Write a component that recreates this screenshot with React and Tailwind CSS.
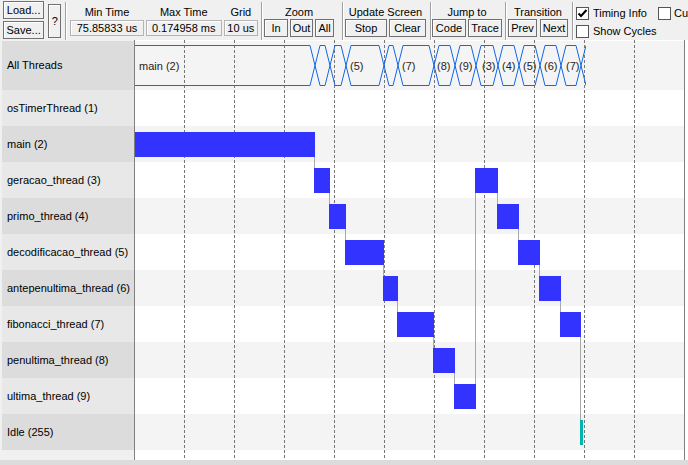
import React from 'react';

const threads = [
  'osTimerThread (1)',
  'main (2)',
  'geracao_thread (3)',
  'primo_thread (4)',
  'decodificacao_thread (5)',
  'antepenultima_thread (6)',
  'fibonacci_thread (7)',
  'penultima_thread (8)',
  'ultima_thread (9)',
  'Idle (255)',
];

// [row, start, end, label x in the "All Threads" strip]
const seq = [
  [1, 135, 315, 139],
  [2, 315, 330, null],
  [3, 330, 346, null],
  [4, 346, 384, 350],
  [5, 384, 398, null],
  [6, 398, 434, 402],
  [7, 434, 455, 437],
  [8, 455, 476, 459],
  [2, 476, 498, 482],
  [3, 498, 519, 502],
  [4, 519, 540, 523],
  [5, 540, 561, 544],
  [6, 561, 581, 566],
  [9, 581, 583, null],
];

const rowTop = (r) => 90 + r * 36;
const TOP = 45.5;
const BOT = 85.5;
const grid = [184, 234, 284, 334, 384, 434, 484, 534, 584, 634];

const Btn = ({ children, className }) => (
  <div
    className={`flex items-center justify-center border border-[#707070] bg-[#f0f0f0] shadow-[inset_1px_1px_0_#ffffff] text-[11px] leading-none text-black ${className}`}
  >
    {children}
  </div>
);

const Sep = ({ className }) => (
  <div className={`w-[2px] h-[38px] mt-[2px] border-l border-[#a0a0a0] bg-white ${className}`} />
);

const ValueBox = ({ label, value, className }) => (
  <div className={`flex flex-col ${className}`}>
    <div className="h-[16px] leading-[16px] text-center text-[11px] whitespace-nowrap">{label}</div>
    <div className="h-[16px] border border-[#b4b4b4] shadow-[inset_1px_1px_0_#ffffff] flex items-center justify-center text-[11px] leading-none whitespace-nowrap">
      {value}
    </div>
  </div>
);

const Group = ({ label, children, className }) => (
  <div className={`flex flex-col ${className}`}>
    <div className="h-[15px] leading-[16px] text-center text-[11px] whitespace-nowrap">{label}</div>
    <div className="flex">{children}</div>
  </div>
);

const Check = ({ checked }) => (
  <div className="w-[13px] h-[13px] border border-[#555] bg-white flex items-center justify-center">
    {checked && (
      <svg width="11" height="11" viewBox="0 0 11 11">
        <path d="M1.5 5.5 L4 8 L9.5 2" fill="none" stroke="#000" strokeWidth="2" />
      </svg>
    )}
  </div>
);

const Toolbar = () => (
  <div className="h-[40px] flex items-start bg-[#f0f0f0] pl-[3px] text-black">
    <div className="flex flex-col w-[42px]">
      <Btn className="mt-[1px] h-[18px]">Load...</Btn>
      <Btn className="mt-[2px] h-[18px]">Save...</Btn>
    </div>
    <Btn className="ml-[4px] mt-[4px] w-[13px] h-[34px]">?</Btn>
    <Sep className="ml-[4px]" />
    <ValueBox label="Min Time" value="75.85833 us" className="ml-[3px] w-[75px] pt-[4px]" />
    <ValueBox label="Max Time" value="0.174958 ms" className="ml-[2px] w-[77px] pt-[4px]" />
    <ValueBox label="Grid" value="10 us" className="ml-[2px] w-[35px] pt-[4px]" />
    <Sep className="ml-[3px]" />
    <Group label="Zoom" className="ml-[1px] pt-[4px]">
      <Btn className="w-[24px] h-[18px]">In</Btn>
      <Btn className="ml-[2px] w-[23px] h-[18px]">Out</Btn>
      <Btn className="ml-[2px] w-[19px] h-[18px]">All</Btn>
    </Group>
    <Sep className="ml-[8px]" />
    <Group label="Update Screen" className="ml-[1px] pt-[4px]">
      <Btn className="w-[42px] h-[18px]">Stop</Btn>
      <Btn className="ml-[2px] w-[37px] h-[18px]">Clear</Btn>
    </Group>
    <Sep className="ml-[4px]" />
    <Group label="Jump to" className="pt-[4px]">
      <Btn className="w-[34px] h-[18px]">Code</Btn>
      <Btn className="ml-[2px] w-[34px] h-[18px]">Trace</Btn>
    </Group>
    <Sep className="ml-[3px]" />
    <Group label="Transition" className="ml-[1px] pt-[4px]">
      <Btn className="w-[29px] h-[18px]">Prev</Btn>
      <Btn className="ml-[3px] w-[28px] h-[18px]">Next</Btn>
    </Group>
    <Sep className="ml-[4px]" />
    <div className="ml-[2px] pt-[7px] flex flex-col gap-[5px] text-[11px] leading-none">
      <div className="flex items-center h-[13px] whitespace-nowrap">
        <Check checked />
        <span className="ml-[4px] w-[65px]">Timing Info</span>
        <Check />
        <span className="ml-[3px]">Cu</span>
      </div>
      <div className="flex items-center h-[13px] whitespace-nowrap">
        <Check />
        <span className="ml-[4px]">Show Cycles</span>
      </div>
    </div>
  </div>
);

const Chart = () => {
  const conns = [];
  for (let i = 1; i < seq.length; i++) {
    const [r0] = seq[i - 1];
    const [r1, s] = seq[i];
    const x = s - 0.5;
    const y1 = r1 > r0 ? rowTop(r0) + 31 : rowTop(r0) + 6;
    const y2 = r1 > r0 ? rowTop(r1) + 6 : rowTop(r1) + 31;
    conns.push(<line key={i} x1={x} x2={x} y1={y1} y2={y2} stroke="#a8a8a8" strokeWidth="1" />);
  }

  const T = seq.slice(1).map((s) => s[1]);
  const wave = [];
  wave.push(<line key="t0" x1={135} x2={T[0] - 5} y1={TOP} y2={TOP} />);
  wave.push(<line key="b0" x1={135} x2={T[0] - 5} y1={BOT} y2={BOT} />);
  T.forEach((t, i) => {
    wave.push(<line key={`xa${i}`} x1={t - 5} y1={TOP} x2={t + 5} y2={BOT} />);
    wave.push(<line key={`xb${i}`} x1={t - 5} y1={BOT} x2={t + 5} y2={TOP} />);
    if (i < T.length - 1 && T[i + 1] - 5 > t + 5) {
      wave.push(<line key={`t${i + 1}`} x1={t + 5} x2={T[i + 1] - 5} y1={TOP} y2={TOP} />);
      wave.push(<line key={`b${i + 1}`} x1={t + 5} x2={T[i + 1] - 5} y1={BOT} y2={BOT} />);
    }
  });

  return (
    <svg className="absolute left-0 top-0" width="549" height="420" viewBox="0 0 549 420">
      <defs>
        <clipPath id="waveclip">
          <rect x="135" y="40" width="451" height="60" />
        </clipPath>
      </defs>
      <g transform="translate(-135 -40)">
        {grid.map((x) => (
          <line key={x} x1={x + 0.5} x2={x + 0.5} y1={40} y2={459} stroke="#777" strokeDasharray="3 2" />
        ))}
        <g clipPath="url(#waveclip)" stroke="#1068ec" strokeWidth="1" fill="none">
          {wave}
        </g>
        {seq.map(([r, , , lx], i) =>
          lx == null ? null : (
            <text
              key={i}
              x={lx}
              y={70}
              fontSize="11"
              fill="#2a2218"
              fontFamily="'Liberation Sans', Arial, sans-serif"
            >
              {i === 0 ? 'main (2)' : `(${r + 1})`}
            </text>
          )
        )}
        <g shapeRendering="crispEdges">{conns}</g>
        <g shapeRendering="crispEdges">
          {seq.map(([r, s, e], i) => {
            const x = i === 0 ? s : s - 1;
            return (
              <rect
                key={i}
                x={x}
                y={rowTop(r) + 6}
                width={e - x}
                height={25}
                fill={r === 9 ? '#00b4b0' : '#3333ff'}
              />
            );
          })}
        </g>
      </g>
    </svg>
  );
};

const App = () => (
  <div className="w-[688px] h-[465px] overflow-hidden bg-white flex flex-col font-['Liberation_Sans',Arial,sans-serif] text-black">
    <Toolbar />
    <div className="flex h-[420px]">
      <div className="w-[135px] border-r border-[#808080] bg-[#f0f0f0] pt-[1px] pl-[2px] flex flex-col">
        <div className="h-[49px] bg-[#dcdcdc] flex items-center pl-[5px] text-[11px]">All Threads</div>
        {threads.map((t, i) => (
          <div
            key={t}
            className={`h-[36px] flex items-center pl-[5px] text-[11px] whitespace-nowrap ${i % 2 ? 'bg-[#dcdcdc]' : 'bg-[#e8e8e8]'}`}
          >
            {t}
          </div>
        ))}
      </div>
      <div className="relative w-[550px] border-r border-[#808080] flex flex-col">
        <div className="h-[1px] bg-white" />
        <div className="h-[49px] bg-[#f4f4f4]" />
        {threads.map((t, i) => (
          <div key={t} className={`h-[36px] ${i % 2 ? 'bg-[#f4f4f4]' : 'bg-white'}`} />
        ))}
        <div className="flex-1 bg-white" />
        <Chart />
      </div>
      <div className="flex-1 bg-white" />
    </div>
    <div className="h-[5px] bg-[#dcdcdc]" />
  </div>
);

export default App;
